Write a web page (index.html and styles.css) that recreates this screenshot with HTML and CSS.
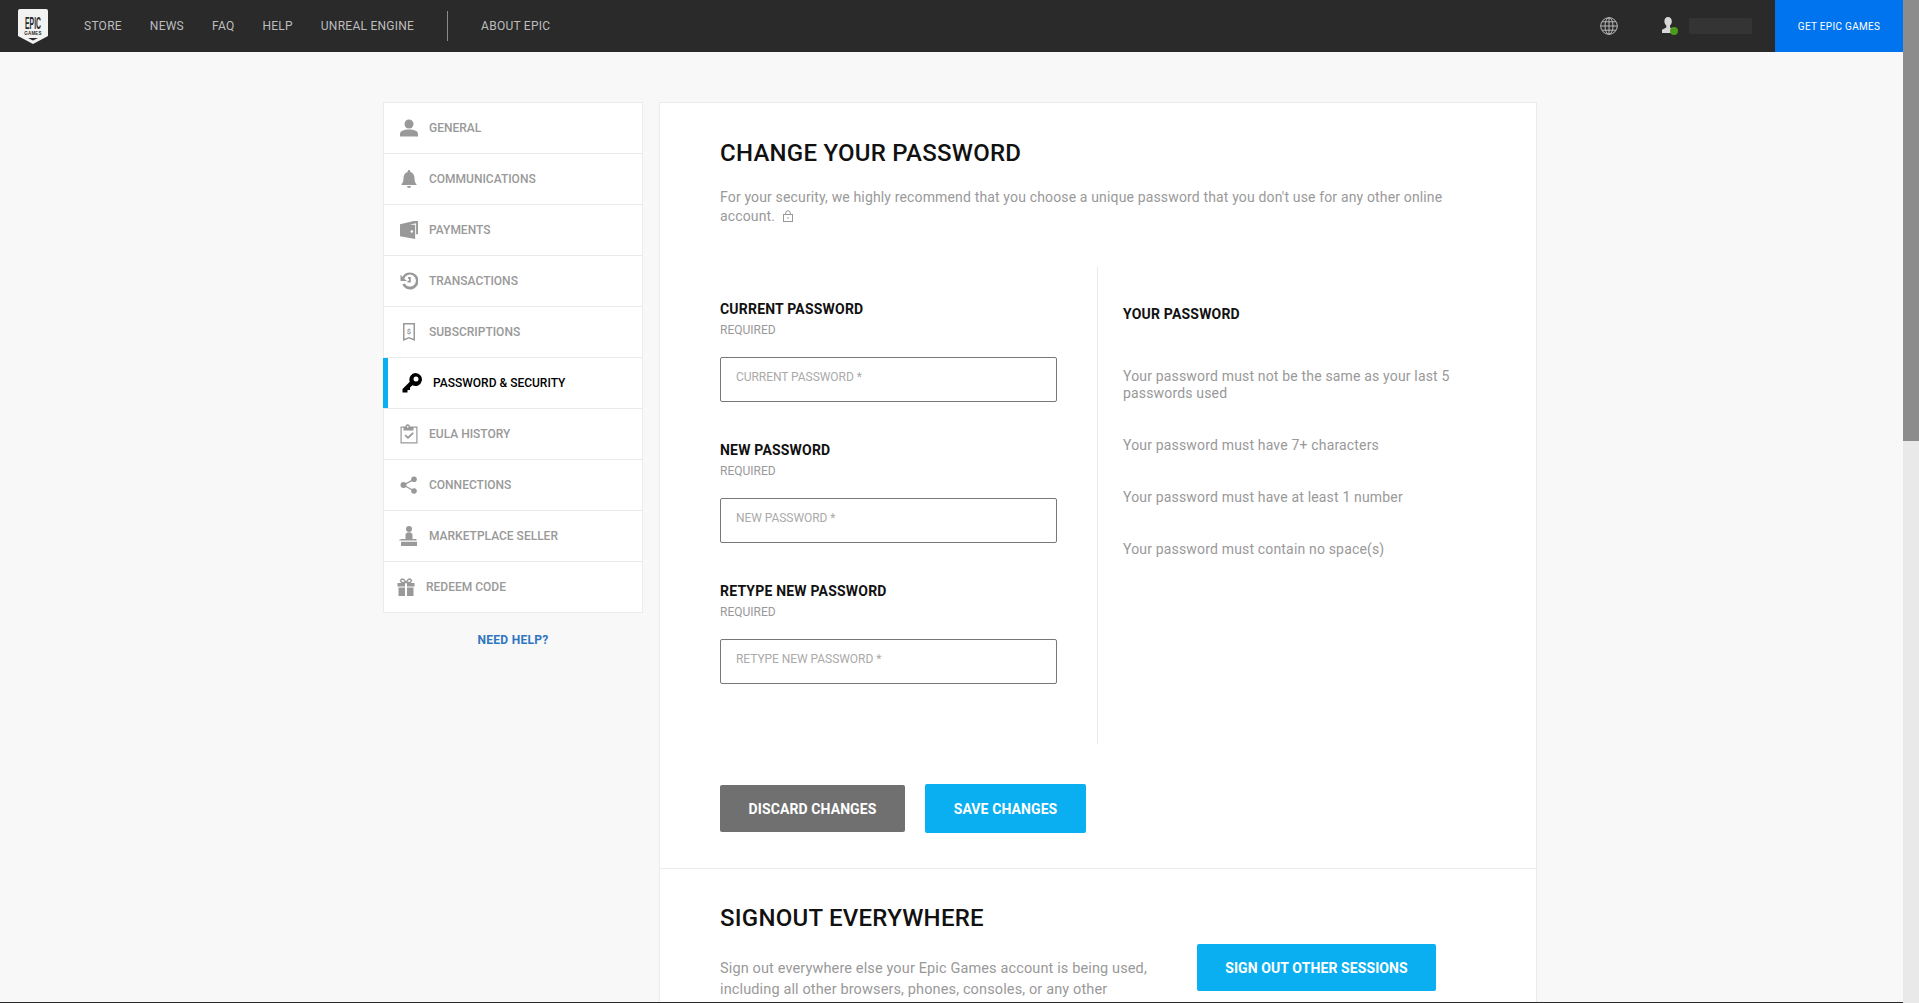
FILE: index.html
```html
<!DOCTYPE html>
<html lang="en">
<head>
<meta charset="utf-8">
<title>Change your password</title>
<link rel="stylesheet" href="styles.css">
</head>
<body>
<div class="page">
  <div class="viewport">
    <header class="topbar">
      <a class="logo" href="#">
        <svg viewBox="0 0 30 35" width="30" height="35">
          <path d="M2 0H28a2 2 0 0 1 2 2V27L15 35 0 27V2A2 2 0 0 1 2 0Z" fill="#f2f2f2"/>
          <text class="logo-epic" transform="translate(15 20) scale(.62 1.500)" text-anchor="middle">EPIC</text>
          <text class="logo-games" x="15" y="26" text-anchor="middle">GAMES</text>
          <path d="M10 29H20L15 31.500Z" fill="#2a2a2a"/>
        </svg>
      </a>
      <nav class="nav">
        <a>STORE</a><a>NEWS</a><a>FAQ</a><a>HELP</a><a>UNREAL ENGINE</a>
        <span class="nav-sep"></span>
        <a>ABOUT EPIC</a>
      </nav>
      <div class="top-right">
        <svg class="globe" viewBox="0 0 18 18" width="18" height="18" fill="none" stroke="#b9b9b9" stroke-width="1">
          <circle cx="9" cy="9" r="8.300"/><ellipse cx="9" cy="9" rx="4" ry="8.300"/>
          <path d="M9 .7V17.300M.7 9H17.300M2 4.800H16M2 13.200H16"/>
        </svg>
        <span class="user">
          <svg viewBox="0 0 16 18" width="16" height="18">
            <path d="M6 0C3.700 0 2.400 1.800 2.400 4.200c0 2 .9 3.500 1.900 4.400v2L0 12.800V16h12v-3.200l-4-2.200V8.600c1.100-.9 1.800-2.400 1.800-4.400C9.800 1.800 8.300 0 6 0Z" fill="#d8d8d8"/>
            <circle cx="12" cy="14" r="4" fill="#4e9a1e"/>
          </svg>
        </span>
        <span class="user-name"></span>
        <a class="get-epic">GET EPIC GAMES</a>
      </div>
    </header>

    <main class="content">
      <aside class="side">
        <ul class="menu">
          <li class="item"><svg class="ico" viewBox="0 0 18 18"><circle cx="9" cy="5" r="4.500"/><path d="M0 17.500v-2.500c0-3 3.500-4.500 9-4.500s9 1.500 9 4.500v2.500Z"/></svg><span>GENERAL</span></li>
          <li class="item"><svg class="ico" viewBox="0 0 18 18"><path d="M9 0a1.300 1.300 0 0 1 1.300 1.300v.6C13 2.600 14.500 5 14.500 8c0 3.500.8 5 2 6v1H1.500v-1c1.200-1 2-2.500 2-6 0-3 1.500-5.400 4.200-6.100v-.6A1.300 1.300 0 0 1 9 0ZM7 16h4a2 2 0 0 1-4 0Z"/></svg><span>COMMUNICATIONS</span></li>
          <li class="item"><svg class="ico" viewBox="0 0 19 19"><path d="M0 3.500 14.500 0H19V14H17V2.500L10 4H16V19L0 16Z"/><circle cx="12.500" cy="11" r="1.300" fill="#fff"/></svg><span>PAYMENTS</span></li>
          <li class="item"><svg class="ico" viewBox="0 0 18 18"><path d="M10 .5A8.500 8.500 0 1 1 2.300 12.500L4.700 11.500A6 6 0 1 0 4.200 6.800L7 9H.5V2.500L2.400 4.900A8.500 8.500 0 0 1 10 .5ZM8 5H10.800V10.500H7.500V8.800H9V6.700H8Z"/></svg><span>TRANSACTIONS</span></li>
          <li class="item"><svg class="ico" viewBox="0 0 18 18"><path d="M3 0H15V18L9 15.500 3 18ZM4.500 1.500V15.800L9 14 13.500 15.800V1.500Z" fill-rule="evenodd"/><text class="ico-dollar" x="9" y="10.800" text-anchor="middle">$</text></svg><span>SUBSCRIPTIONS</span></li>
          <li class="item item-active"><svg class="ico ico-key" viewBox="0 0 20 20"><path d="M13.500 0a6.500 6.500 0 1 1-3 12.300L8 14.500V17H5.500v2.500H.500V16L7.800 8.800A6.500 6.500 0 0 1 13.500 0Zm.5 3.500a2.500 2.500 0 1 0 0 5 2.500 2.500 0 1 0 0-5Z" fill-rule="evenodd"/></svg><span>PASSWORD &amp; SECURITY</span></li>
          <li class="item"><svg class="ico ico-big" viewBox="0 0 18 20"><path d="M.5 2.500H5.500C5.700 1.200 6.300.3 7.700.3S9.800 1.200 10 2.500H17.500V19.500H.5ZM1.700 3.800V18.300H16.300V3.800H13.500V6.500H3.500V3.800ZM7 3.500H8.500V2H7ZM4.500 11.800 5.800 10.500 8 12.600 12.500 8.300 13.800 9.600 8 15.100Z" fill-rule="evenodd"/></svg><span>EULA HISTORY</span></li>
          <li class="item"><svg class="ico" viewBox="0 0 18 18"><circle cx="14" cy="3.300" r="2.800"/><circle cx="3.500" cy="9" r="3"/><circle cx="14" cy="15" r="2.800"/><path d="M3.500 9 14 3.300M3.500 9 14 15" fill="none" stroke="#999" stroke-width="1.400"/></svg><span>CONNECTIONS</span></li>
          <li class="item"><svg class="ico ico-big" viewBox="0 0 20 20"><circle cx="10" cy="3" r="3"/><path d="M6.500 13V9c0-2 1.500-2.800 3.500-2.800s3.500.8 3.500 2.800v4ZM2.500 13H17.500V14.500H0V14ZM2 15.800H18V20H2Z"/></svg><span>MARKETPLACE SELLER</span></li>
          <li class="item item-redeem"><svg class="ico" viewBox="0 0 18 18"><path d="M.5 5H8V8.500H.5ZM10 5H17.500V8.500H10ZM1.500 9.500H8V18H1.500ZM10 9.500H16.500V18H10Z"/><path d="M9 4.500 6.500 1.200H4.500L3.500 2.500 4.700 4.500ZM9 4.500 11.500 1.200H13.500L14.500 2.500 13.300 4.500Z" fill="none" stroke="#999" stroke-width="1.400"/></svg><span>REDEEM CODE</span></li>
        </ul>
        <a class="need-help">NEED HELP?</a>
      </aside>

      <section class="card">
        <div class="block block-password">
          <h1 class="title">CHANGE YOUR PASSWORD</h1>
          <p class="lead">For your security, we highly recommend that you choose a unique password that you don't use for any other online account.
            <svg class="lock" viewBox="0 0 10 12" width="10" height="12" fill="none" stroke="#999"><rect x=".5" y="4.500" width="9" height="7"/><path d="M2.700 4.500V3a2.300 2.300 0 0 1 4.600 0v1.500"/><circle cx="5" cy="8" r=".8" fill="#999" stroke="none"/></svg>
          </p>
          <div class="columns">
            <form class="fields">
              <div class="field">
                <label class="field-label">CURRENT PASSWORD</label>
                <div class="field-req">REQUIRED</div>
                <div class="input">CURRENT PASSWORD *</div>
              </div>
              <div class="field">
                <label class="field-label">NEW PASSWORD</label>
                <div class="field-req">REQUIRED</div>
                <div class="input">NEW PASSWORD *</div>
              </div>
              <div class="field">
                <label class="field-label">RETYPE NEW PASSWORD</label>
                <div class="field-req">REQUIRED</div>
                <div class="input">RETYPE NEW PASSWORD *</div>
              </div>
            </form>
            <div class="rules">
              <h2 class="rules-title">YOUR PASSWORD</h2>
              <p class="rule">Your password must not be the same as your last 5 passwords used</p>
              <p class="rule">Your password must have 7+ characters</p>
              <p class="rule">Your password must have at least 1 number</p>
              <p class="rule">Your password must contain no space(s)</p>
            </div>
          </div>
          <div class="actions">
            <button class="btn btn-grey">DISCARD CHANGES</button>
            <button class="btn btn-blue btn-save">SAVE CHANGES</button>
          </div>
        </div>
        <div class="block block-signout">
          <h2 class="title">SIGNOUT EVERYWHERE</h2>
          <div class="signout-row">
            <p class="signout-text">Sign out everywhere else your Epic Games account is being used, including all other browsers, phones, consoles, or any other device.</p>
            <button class="btn btn-blue btn-signout">SIGN OUT OTHER SESSIONS</button>
          </div>
        </div>
      </section>
    </main>
    <div class="edge"></div>
  </div>
  <div class="scrollbar"><div class="thumb"></div></div>
</div>
</body>
</html>
```
FILE: styles.css
```css
* { box-sizing: border-box; }
html, body { margin: 0; height: 100%; overflow: hidden; }
body { font-family: "Roboto", "Liberation Sans", sans-serif; background: #f8f8f8; color: #999; }
ul { list-style: none; margin: 0; padding: 0; }
p, h1, h2 { margin: 0; }

.page { display: flex; height: 1003px; }
.viewport { flex: 1; min-width: 0; display: flex; flex-direction: column; height: 1003px; overflow: hidden; }
.scrollbar { width: 16px; background: #e9e9e9; flex: none; }
.thumb { height: 441px; background: #8c8c8c; }
.edge { flex: none; height: 1px; background: #2a2a2a; }

/* top bar */
.topbar { flex: none; height: 52px; background: #2a2a2a; display: flex; align-items: center; }
.logo { margin-left: 18px; width: 30px; height: 35px; display: block; }
.logo svg { display: block; overflow: visible; }
.logo-epic { font: 700 11px "Liberation Sans", sans-serif; fill: #2a2a2a; }
.logo-games { font: 700 4.500px "Liberation Sans", sans-serif; fill: #2a2a2a; letter-spacing: .2px; }
.nav { margin-left: 36px; display: flex; align-items: center; gap: 28px; color: #bdbdbd; font-size: 12px; letter-spacing: .25px; }
.nav-sep { width: 1px; height: 30px; background: #8a8a8a; margin: 0 5px; }
.top-right { margin-left: auto; display: flex; align-items: center; height: 100%; }
.globe { display: block; margin-right: 44px; }
.user { display: block; height: 18px; margin-right: 11px; }
.user svg { display: block; }
.user-name { width: 63px; height: 16px; background: #343434; border-radius: 1px; margin-right: 23px; }
.get-epic { width: 128px; height: 100%; background: #0074ef; color: #fff; font-size: 10px; letter-spacing: .3px; display: flex; align-items: center; justify-content: center; }

/* main layout */
.content { flex: 1; min-height: 0; display: flex; gap: 16px; align-items: flex-start; padding: 50px 0 0 383px; }
.side { width: 260px; flex: none; }
.menu { background: #fff; border: 1px solid #ebebeb; }
.item { height: 51px; display: flex; align-items: center; padding-left: 16px; gap: 11px; font-size: 12px; font-weight: 500; color: #999; border-bottom: 1px solid #ebebeb; }
.item:last-child { border-bottom: 0; height: 50px; }
.ico { width: 18px; height: 18px; fill: #999; flex: none; display: block; }
.ico-big { width: 20px; height: 20px; margin: 0 -1px; }
.ico-dollar { font: 700 7.500px "Roboto", sans-serif; fill: #999; }
.item-redeem { padding-left: 13px; }
.item-active { color: #000; box-shadow: inset 5px 0 0 #0aaff1; margin-left: -1px; padding-left: 19px; }
.ico-key { width: 20px; height: 20px; fill: #000; }
.need-help { display: block; text-align: center; margin-top: 19px; font-size: 12px; font-weight: 700; color: #2f76c0; letter-spacing: .3px; line-height: 16px; }

/* card */
.card { width: 878px; flex: none; height: 1000px; background: #fff; border: 1px solid #ebebeb; }
.block { padding: 0 60px; }
.block-password { padding-top: 35px; padding-bottom: 35px; border-bottom: 1px solid #ebebeb; }
.title { font-size: 24px; line-height: 30px; font-weight: 500; color: #111; letter-spacing: .25px; }
.lead { margin-top: 20px; font-size: 14px; line-height: 19px; width: 740px; letter-spacing: .15px; }
.lock { vertical-align: -1px; margin-left: 4px; }
.columns { margin-top: 41px; display: flex; height: 477px; margin-right: -60px; }
.fields { width: 378px; padding: 33px 0 0; border-right: 1px solid #ebebeb; flex: none; }
.field { margin-bottom: 39px; }
.field-label { display: block; font-size: 14px; line-height: 18px; font-weight: 700; color: #111; letter-spacing: .2px; }
.field-req { margin-top: 4px; font-size: 12px; line-height: 16px; color: #999; }
.input { margin-top: 19px; width: 337px; height: 45px; border: 1px solid #777; border-radius: 2px; background: #fff; padding: 11px 15px; font-size: 12px; line-height: 16px; color: #aaa; letter-spacing: -.05px; }
.rules { padding: 38px 0 0 25px; width: 360px; flex: none; }
.rules-title { font-size: 14px; line-height: 18px; font-weight: 700; color: #111; margin-bottom: 45px; letter-spacing: .2px; }
.rule { font-size: 14px; line-height: 17px; margin-bottom: 35px; letter-spacing: .17px; }
.actions { margin-top: 40px; display: flex; align-items: center; gap: 20px; }
.btn { border: 0; border-radius: 2px; font-family: inherit; font-size: 14px; font-weight: 700; color: #fff; padding: 0; display: block; letter-spacing: .1px; }
.btn-grey { width: 185px; height: 47px; background: #707070; }
.btn-blue { background: #0aaff1; }
.btn-save { width: 161px; height: 49px; }
.block-signout { padding-top: 34px; }
.signout-row { margin-top: 11px; display: flex; align-items: flex-start; }
.signout-text { width: 430px; margin-top: 14px; margin-right: 47px; font-size: 14.500px; line-height: 21px; letter-spacing: .13px; flex: none; }
.btn-signout { width: 239px; height: 47px; flex: none; }
```
